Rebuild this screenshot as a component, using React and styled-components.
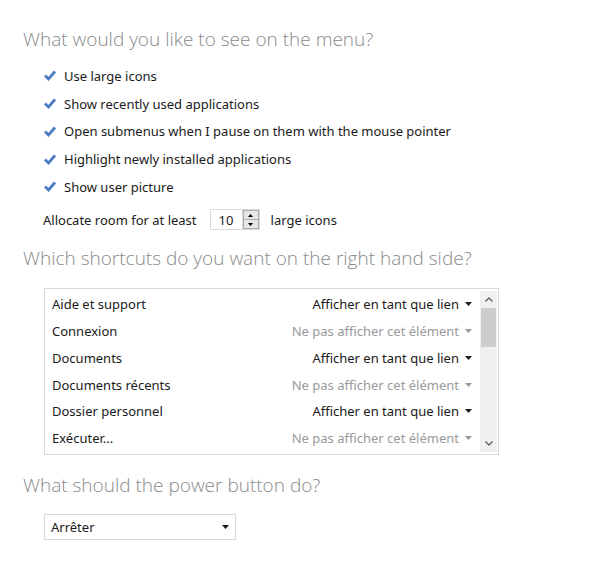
import React from 'react'
import styled, { createGlobalStyle } from 'styled-components'

const GlobalStyle = createGlobalStyle`
  html, body {
    margin: 0;
    padding: 0;
    background: #fff;
  }
  body {
    font-family: "Noto Sans", "Open Sans", sans-serif;
    color: #1a1a1a;
  }
`

const Page = styled.div`
  width: 608px;
  height: 567px;
  padding: 26px 0 0 23px;
  box-sizing: border-box;
  display: flex;
  flex-direction: column;
`

const Heading = styled.h2`
  margin: 0;
  font-family: "Open Sans", "Noto Sans", sans-serif;
  font-weight: 300;
  font-size: 19px;
  line-height: 26px;
  color: #8a8a8a;
  margin-top: ${p => p.$top || 0}px;
`

const Options = styled.div`
  display: flex;
  flex-direction: column;
  padding-left: 21px;
  margin-top: 10px;
`

const OptionRow = styled.div`
  display: flex;
  align-items: center;
  height: 27.75px;
  font-size: 13px;
  gap: 8px;
`

const CheckBox = styled.span`
  width: 12px;
  height: 11px;
  display: flex;
  align-items: center;
  justify-content: center;
`

const AllocateRow = styled.div`
  display: flex;
  align-items: center;
  font-size: 13px;
  margin-left: 20px;
  margin-top: 7px;
  margin-bottom: 13px;
  height: 24px;
`

const Spinner = styled.div`
  display: flex;
  align-items: stretch;
  width: 50px;
  height: 21px;
  border: 1px solid #dadada;
  box-sizing: border-box;
  margin: 0 11px 0 13px;
`

const SpinValue = styled.div`
  flex: 1;
  display: flex;
  align-items: center;
  padding-left: 8px;
  font-size: 13px;
`

const SpinButtons = styled.div`
  width: 16px;
  display: flex;
  flex-direction: column;
  border-left: 1px solid #dadada;
`

const SpinButton = styled.div`
  flex: 1;
  display: flex;
  align-items: center;
  justify-content: center;
  background: #e6e6e6;
  border: 1px solid #adadad;
  box-sizing: border-box;
  & + & {
    border-top: none;
  }
`

const ListBox = styled.div`
  margin: 17px 0 0 21px;
  width: 455px;
  height: 167px;
  border: 1px solid #d9d9d9;
  box-sizing: border-box;
  display: flex;
  padding: 2px 1px 2px 0;
`

const Rows = styled.div`
  flex: 1;
  display: flex;
  flex-direction: column;
`

const ItemRow = styled.div`
  display: flex;
  align-items: center;
  justify-content: space-between;
  height: 27px;
  font-size: 13px;
  padding: 0 8px 0 7px;
`

const ItemChoice = styled.span`
  display: flex;
  align-items: center;
  gap: 6px;
  color: ${p => (p.$muted ? '#9a9a9a' : '#1a1a1a')};
`

const Scrollbar = styled.div`
  width: 17px;
  background: #f0f0f0;
  display: flex;
  flex-direction: column;
`

const ScrollArrow = styled.div`
  height: 17px;
  display: flex;
  align-items: center;
  justify-content: center;
`

const Thumb = styled.div`
  height: 39px;
  margin: 0 1px;
  background: #cdcdcd;
`

const Spacer = styled.div`
  flex: 1;
`

const Select = styled.div`
  margin: 16px 0 0 21px;
  width: 192px;
  height: 26px;
  border: 1px solid #d9d9d9;
  box-sizing: border-box;
  display: flex;
  align-items: center;
  justify-content: space-between;
  padding: 0 6px 0 6px;
  font-size: 13px;
`

const Check = () => (
  <CheckBox>
    <svg width="12" height="11" viewBox="0 0 12 11">
      <path d="M1 5.5 L4.5 9 L11 1.5" fill="none" stroke="#4a7ec2" strokeWidth="2.8" />
    </svg>
  </CheckBox>
)

const Caret = ({ color = '#1a1a1a' }) => (
  <svg width="7" height="4" viewBox="0 0 7 4">
    <path d="M0 0 H7 L3.5 4 Z" fill={color} />
  </svg>
)

const Chevron = ({ up }) => (
  <svg width="8" height="5" viewBox="0 0 8 5">
    <path
      d={up ? 'M0.5 4.5 L4 1 L7.5 4.5' : 'M0.5 0.5 L4 4 L7.5 0.5'}
      fill="none"
      stroke="#606060"
      strokeWidth="1.4"
    />
  </svg>
)

const SpinArrow = ({ up }) => (
  <svg width="5" height="3" viewBox="0 0 5 3">
    <path d={up ? 'M0 3 H5 L2.5 0 Z' : 'M0 0 H5 L2.5 3 Z'} fill="#000" />
  </svg>
)

const options = [
  'Use large icons',
  'Show recently used applications',
  'Open submenus when I pause on them with the mouse pointer',
  'Highlight newly installed applications',
  'Show user picture',
]

const shortcuts = [
  ['Aide et support', false],
  ['Connexion', true],
  ['Documents', false],
  ['Documents récents', true],
  ['Dossier personnel', false],
  ['Exécuter...', true],
]

export default function App() {
  return (
    <>
      <GlobalStyle />
      <Page>
        <Heading>What would you like to see on the menu?</Heading>
        <Options>
          {options.map(o => (
            <OptionRow key={o}>
              <Check />
              <span>{o}</span>
            </OptionRow>
          ))}
        </Options>
        <AllocateRow>
          Allocate room for at least
          <Spinner>
            <SpinValue>10</SpinValue>
            <SpinButtons>
              <SpinButton><SpinArrow up /></SpinButton>
              <SpinButton><SpinArrow /></SpinButton>
            </SpinButtons>
          </Spinner>
          large icons
        </AllocateRow>
        <Heading>Which shortcuts do you want on the right hand side?</Heading>
        <ListBox>
          <Rows>
            {shortcuts.map(([name, hidden]) => (
              <ItemRow key={name}>
                <span>{name}</span>
                <ItemChoice $muted={hidden}>
                  {hidden ? 'Ne pas afficher cet élément' : 'Afficher en tant que lien'}
                  <Caret color={hidden ? '#9a9a9a' : '#1a1a1a'} />
                </ItemChoice>
              </ItemRow>
            ))}
          </Rows>
          <Scrollbar>
            <ScrollArrow><Chevron up /></ScrollArrow>
            <Thumb />
            <Spacer />
            <ScrollArrow><Chevron /></ScrollArrow>
          </Scrollbar>
        </ListBox>
        <Heading $top={17}>What should the power button do?</Heading>
        <Select>
          Arrêter
          <Caret />
        </Select>
      </Page>
    </>
  )
}
